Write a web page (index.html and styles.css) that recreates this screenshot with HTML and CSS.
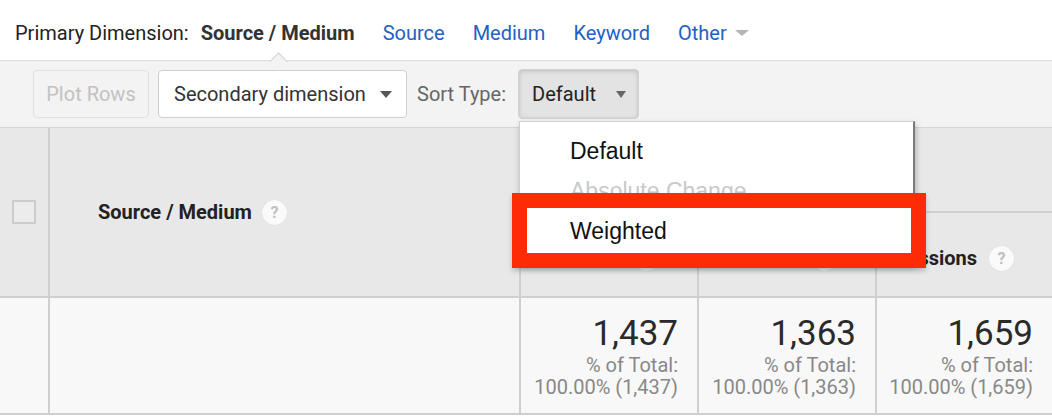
FILE: index.html
```html
<!DOCTYPE html>
<html>
<head>
<meta charset="utf-8">
<link rel="stylesheet" href="styles.css">
</head>
<body>
<div class="page">
  <div class="dimbar">
    <span class="dim-label">Primary Dimension:</span>
    <span class="dim-active">Source / Medium</span>
    <a class="dim-link">Source</a>
    <a class="dim-link">Medium</a>
    <a class="dim-link">Keyword</a>
    <a class="dim-link dim-other">Other <span class="caret caret-light"></span></a>
  </div>

  <div class="toolbar">
    <button class="btn btn-disabled">Plot Rows</button>
    <button class="btn btn-select">Secondary dimension <span class="caret"></span></button>
    <span class="sort-label">Sort Type:</span>
    <button class="btn btn-pressed">Default <span class="caret"></span></button>
  </div>

  <div class="table">
    <div class="cell head check-cell"><span class="checkbox"></span></div>
    <div class="cell head dim-head"><span class="head-text">Source / Medium</span><span class="help">?</span></div>
    <div class="cell head group-head"></div>
    <div class="cell head metric-head"><span class="help">?</span></div>
    <div class="cell head metric-head"><span class="help">?</span></div>
    <div class="cell head metric-head"><span class="head-text">Sessions</span><span class="help">?</span></div>

    <div class="cell data"></div>
    <div class="cell data"></div>
    <div class="cell data total">
      <div class="total-num">1,437</div>
      <div class="total-sub">% of Total:</div>
      <div class="total-sub">100.00% (1,437)</div>
    </div>
    <div class="cell data total">
      <div class="total-num">1,363</div>
      <div class="total-sub">% of Total:</div>
      <div class="total-sub">100.00% (1,363)</div>
    </div>
    <div class="cell data total">
      <div class="total-num">1,659</div>
      <div class="total-sub">% of Total:</div>
      <div class="total-sub">100.00% (1,659)</div>
    </div>
  </div>

  <div class="menu">
    <div class="menu-item">Default</div>
    <div class="menu-item menu-disabled">Absolute Change</div>
    <div class="menu-item">Weighted</div>
  </div>
  <div class="highlight"></div>
</div>
</body>
</html>
```

FILE: styles.css
```css
* {
  box-sizing: border-box;
  margin: 0;
  padding: 0;
}

body {
  background: #fff;
  font-family: Roboto, "Liberation Sans", Arial, sans-serif;
  color: #333;
}

.page {
  position: relative;
  width: 1052px;
  height: 416px;
  overflow: hidden;
}

/* ---------- primary dimension bar ---------- */
.dimbar {
  position: relative;
  height: 61px;
  display: flex;
  align-items: center;
  gap: 28px;
  padding: 5px 0 0 15px;
  border-bottom: 1px solid #dddddd;
  font-size: 20px;
}

.dim-label {
  color: #222;
  margin-right: -16px;
}

.dim-active {
  position: relative;
  font-weight: 700;
  color: #333;
}

.dim-active::after {
  content: "";
  position: absolute;
  left: 50%;
  top: calc(100% + 10px);
  width: 12px;
  height: 12px;
  margin-left: -6px;
  background: #f3f3f3;
  border-top: 1px solid #d4d4d4;
  border-left: 1px solid #d4d4d4;
  transform: rotate(45deg);
}

.dim-link {
  color: #2461c2;
}

.dim-other {
  display: flex;
  align-items: center;
  gap: 8px;
}

.caret {
  display: inline-block;
  width: 0;
  height: 0;
  border-left: 6px solid transparent;
  border-right: 6px solid transparent;
  border-top: 7px solid #555;
}

.caret-light {
  border-left-width: 7px;
  border-right-width: 7px;
  border-top: 6px solid #b5b5b5;
}

/* ---------- toolbar ---------- */
.toolbar {
  height: 67px;
  display: flex;
  align-items: center;
  padding-left: 33px;
  background: #f3f3f3;
  border-bottom: 1px solid #d6d6d6;
}

.btn {
  height: 48px;
  border-radius: 4px;
  font-family: Roboto, "Liberation Sans", Arial, sans-serif;
  font-size: 20px;
  display: flex;
  align-items: center;
}

.btn-disabled {
  width: 116px;
  justify-content: center;
  background: #f3f3f3;
  border: 1px solid #e0e0e0;
  color: #c2c2c2;
  margin-right: 9px;
}

.btn-select {
  width: 249px;
  justify-content: space-between;
  padding: 0 14px 0 15px;
  background: #fff;
  border: 1px solid #cfcfcf;
  color: #333;
  margin-right: 10px;
}

.sort-label {
  color: #666;
  font-size: 20px;
  margin-right: 12px;
}

.btn-pressed {
  width: 121px;
  height: 50px;
  justify-content: space-between;
  padding: 0 12px 0 13px;
  background: #e3e3e3;
  border: 1px solid #d2d2d2;
  box-shadow: inset 0 1px 4px rgba(0, 0, 0, 0.18);
  color: #222;
}

.btn-pressed .caret {
  border-left-width: 5px;
  border-right-width: 5px;
  border-top: 7px solid #666;
}

/* ---------- table ---------- */
.table {
  display: grid;
  grid-template-columns: 48px 469px 176px 176px 175px;
  grid-template-rows: 83px 83px 115px;
  gap: 2px;
  padding-bottom: 2px;
  background: #cfcfcf;
}

.cell {
  background: #e8e8e8;
}

.head {
  font-size: 20px;
  font-weight: 700;
  color: #222;
}

.check-cell {
  grid-row: 1 / span 2;
  display: flex;
  align-items: center;
  justify-content: center;
}

.checkbox {
  width: 24px;
  height: 24px;
  border: 2px solid #cccccc;
  background: #ececec;
}

.dim-head {
  grid-row: 1 / span 2;
  display: flex;
  align-items: center;
  padding-left: 48px;
  gap: 10px;
}

.group-head {
  grid-column: 3 / span 3;
}

.metric-head {
  display: flex;
  align-items: center;
  justify-content: flex-end;
  gap: 12px;
  padding: 7px 38px 0 0;
}

.help {
  width: 25px;
  height: 25px;
  border-radius: 50%;
  background: #fafafa;
  box-shadow: 0 0 1px rgba(0, 0, 0, 0.12);
  color: #c0c0c0;
  font-size: 16px;
  font-weight: 700;
  display: flex;
  align-items: center;
  justify-content: center;
}

.data {
  background: #f8f8f8;
}

.total {
  text-align: right;
  padding: 16px 19px 0 0;
}

.total-num {
  font-size: 35px;
  line-height: 40px;
  color: #2a2a2a;
}

.total-sub {
  font-size: 20px;
  line-height: 22px;
  color: #888;
}

/* ---------- dropdown overlay ---------- */
.menu {
  position: absolute;
  left: 519px;
  top: 121px;
  width: 396px;
  height: 144px;
  padding-top: 10px;
  background: #fff;
  border: 1px solid #cfcfcf;
  border-right: 2px solid #7a7a7a;
  box-shadow: 1px 3px 6px rgba(0, 0, 0, 0.25);
  font-family: "Liberation Sans", Arial, sans-serif;
  font-size: 23px;
}

.menu-item {
  height: 40px;
  display: flex;
  align-items: center;
  padding-left: 50px;
  line-height: 1.1;
  color: #111;
}

.menu-disabled {
  color: #c9c9c9;
}

.highlight {
  position: absolute;
  left: 512px;
  top: 193px;
  width: 414px;
  height: 75px;
  border: 15px solid #fe2c06;
  box-shadow: 0 3px 5px rgba(0, 0, 0, 0.2);
}
```
